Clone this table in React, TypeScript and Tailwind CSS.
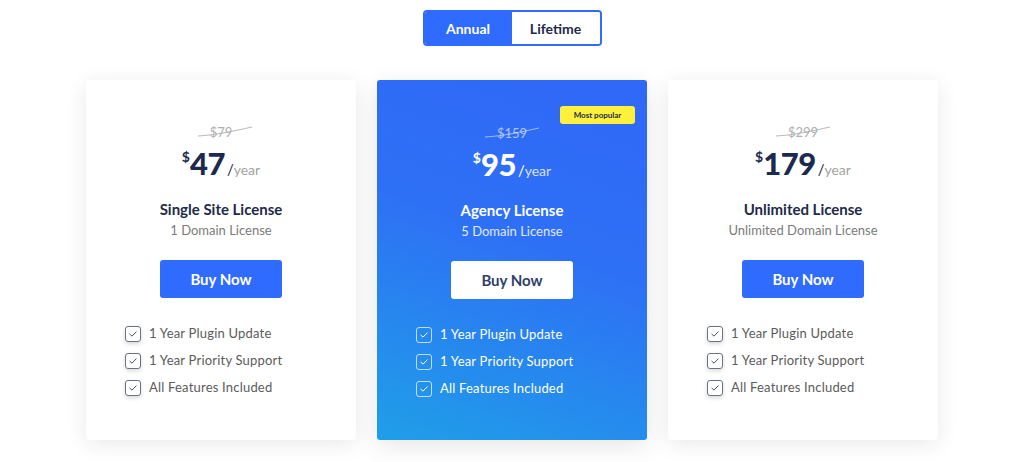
import { useState } from "react";

const plans = [
  { old: "$79", price: "47", title: "Single Site License", sub: "1 Domain License", featured: false },
  { old: "$159", price: "95", title: "Agency License", sub: "5 Domain License", featured: true },
  { old: "$299", price: "179", title: "Unlimited License", sub: "Unlimited Domain License", featured: false },
];

const features = ["1 Year Plugin Update", "1 Year Priority Support", "All Features Included"];

function CheckBox({ light }: { light: boolean }) {
  return (
    <span
      className={
        "flex h-4 w-4 shrink-0 items-center justify-center rounded-[3px] border " +
        (light
          ? "border-white/70"
          : "border-[#6b7280] shadow-[0_2px_4px_rgba(0,0,0,0.15)]")
      }
    >
      <svg viewBox="0 0 12 12" className="h-[10px] w-[10px]" fill="none">
        <path
          d="M2.2 6.2 4.8 8.6 9.8 3.4"
          stroke={light ? "#ffffff" : "#4b5563"}
          strokeWidth="1.2"
          strokeLinecap="round"
          strokeLinejoin="round"
        />
      </svg>
    </span>
  );
}

function PlanCard({ plan }: { plan: (typeof plans)[number] }) {
  const f = plan.featured;
  return (
    <div
      className={
        "relative flex h-[360px] w-[270px] flex-col items-center rounded-[3px] pt-[44px] " +
        (f
          ? "bg-[linear-gradient(200deg,#3068f7_0%,#2e70f5_45%,#1f9fe8_100%)] pt-[45px] shadow-[0_6px_24px_rgba(0,0,0,0.1)]"
          : "bg-white shadow-[0_4px_22px_rgba(0,0,0,0.09)]")
      }
    >
      {f && (
        <span className="absolute right-[12px] top-[26px] flex h-[18px] w-[75px] items-center justify-center rounded-[3px] bg-[#fdf13b] text-[8px] font-bold text-[#1e2a4a]">
          Most popular
        </span>
      )}
      <div className="relative text-[13px] leading-4">
        <span className={f ? "text-white/60" : "text-[#b0b0b0]"}>{plan.old}</span>
        <svg className="absolute -left-[12px] top-[2px] h-[12px] w-[54px]" viewBox="0 0 54 12" fill="none">
          <path d="M0 10 C 18 9, 36 5, 54 1" stroke={f ? "rgba(255,255,255,0.6)" : "#b0b0b0"} strokeWidth="0.9" />
        </svg>
      </div>
      <div className={"mt-[5px] flex items-baseline leading-[36px] " + (f ? "text-white" : "text-[#1b2a4e]")}>
        <span className="-translate-y-[13px] text-[14px] font-bold">$</span>
        <span className="text-[31px] font-black tracking-[-0.5px]">{plan.price}</span>
        <span className="ml-[2px] text-[15px]">/</span>
        <span className={"text-[14px] " + (f ? "text-white/80" : "text-[#a3a3a3]")}>year</span>
      </div>
      <h3 className={"mt-[11px] text-[15px] font-bold leading-5 " + (f ? "text-white" : "text-[#1e2a4a]")}>
        {plan.title}
      </h3>
      <p className={"mt-[2px] text-[13px] leading-[18px] " + (f ? "text-white/85" : "text-[#7b7b7b]")}>
        {plan.sub}
      </p>
      <button
        className={
          "mt-[21px] h-[38px] w-[122px] rounded-[3px] text-[15px] font-bold " +
          (f ? "bg-white text-[#2d3f6e]" : "bg-[#2f6bff] text-white")
        }
      >
        Buy Now
      </button>
      <ul className="mt-[27px] flex flex-col gap-[10px] self-start pl-[39px]">
        {features.map((t) => (
          <li key={t} className="flex h-[17px] items-center gap-[8px]">
            <CheckBox light={f} />
            <span className={"text-[13px] tracking-[0.2px] " + (f ? "text-white" : "text-[#5b5b5b]")}>{t}</span>
          </li>
        ))}
      </ul>
    </div>
  );
}

export default function App() {
  const [mode, setMode] = useState<"annual" | "lifetime">("annual");
  return (
    <div className="flex h-[462px] w-full flex-col items-center bg-white pt-[10px] font-['Lato',sans-serif]">
      <div className="flex h-[36px] w-[179px] overflow-hidden rounded-[4px] border-2 border-[#2f6bff]">
        <button
          onClick={() => setMode("annual")}
          className={
            "h-full w-[87px] text-[14px] font-bold " +
            (mode === "annual" ? "bg-[#2f6bff] text-white" : "bg-white text-[#1e2a4a]")
          }
        >
          Annual
        </button>
        <button
          onClick={() => setMode("lifetime")}
          className={
            "h-full flex-1 text-[14px] font-bold " +
            (mode === "lifetime" ? "bg-[#2f6bff] text-white" : "bg-white text-[#1e2a4a]")
          }
        >
          Lifetime
        </button>
      </div>
      <div className="mt-[34px] flex gap-[21px]">
        {plans.map((p) => (
          <PlanCard key={p.title} plan={p} />
        ))}
      </div>
    </div>
  );
}
